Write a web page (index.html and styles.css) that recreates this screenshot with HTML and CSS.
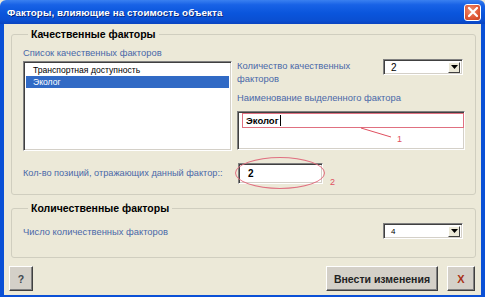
FILE: index.html
```html
<!DOCTYPE html>
<html lang="ru">
<head>
<meta charset="utf-8">
<title>Факторы</title>
<link rel="stylesheet" href="styles.css">
</head>
<body>
<div class="window">
  <div class="titlebar">
    <span class="title">Факторы, влияющие на стоимость объекта</span>
    <span class="close">
      <svg width="12" height="12" viewBox="0 0 12 12"><path d="M2 2 L10 10 M10 2 L2 10" stroke="#fff" stroke-width="2.2" stroke-linecap="round"/></svg>
    </span>
  </div>
  <div class="frame">
    <fieldset class="group group-qual">
      <legend>Качественные факторы</legend>
      <div class="qual-top">
        <div class="col-left">
          <div class="label">Список качественных факторов</div>
          <div class="listbox sunken">
            <div class="item">Транспортная доступность</div>
            <div class="item selected">Эколог</div>
          </div>
        </div>
        <div class="col-right">
          <div class="count-row">
            <div class="label two-line">Количество качественных факторов</div>
            <div class="combo sunken"><span class="val">2</span><span class="drop"><svg width="7" height="4" viewBox="0 0 7 4"><path d="M0 0 H7 L3.5 4 Z" fill="#000"/></svg></span></div>
          </div>
          <div class="label name-label">Наименование выделенного фактора</div>
          <div class="memo sunken">
            <div class="memo-text">Эколог<span class="caret"></span></div>
            <div class="mark-rect"></div>
            <svg class="mark-line" width="40" height="14" viewBox="0 0 40 14"><path d="M1 1 L31 10" stroke="#e05060" stroke-width="1"/></svg>
            <span class="mark-num num1">1</span>
          </div>
        </div>
      </div>
      <div class="pos-row">
        <div class="label pos-label">Кол-во позиций, отражающих данный фактор::</div>
        <div class="pos-wrap">
          <div class="textbox sunken">2</div>
          <div class="ellipse"></div>
          <span class="mark-num num2">2</span>
        </div>
      </div>
    </fieldset>
    <fieldset class="group group-quant">
      <legend>Количественные факторы</legend>
      <div class="quant-row">
        <div class="label">Число количественных факторов</div>
        <div class="combo sunken"><span class="val small">4</span><span class="drop"><svg width="7" height="4" viewBox="0 0 7 4"><path d="M0 0 H7 L3.5 4 Z" fill="#000"/></svg></span></div>
      </div>
    </fieldset>
    <div class="buttons">
      <button class="btn btn-help">?</button>
      <div class="btn-right">
        <button class="btn btn-apply">Внести изменения</button>
        <button class="btn btn-x">X</button>
      </div>
    </div>
  </div>
</div>
</body>
</html>
```

FILE: styles.css
```css
* { box-sizing: border-box; }
html, body { margin: 0; padding: 0; }
body {
  width: 485px;
  height: 297px;
  overflow: hidden;
  font-family: "Liberation Sans", Arial, sans-serif;
  font-size: 10px;
  background: #ECE9D8;
}
.window {
  width: 485px;
  height: 297px;
  display: flex;
  flex-direction: column;
}
.titlebar {
  height: 24px;
  flex: none;
  display: flex;
  align-items: center;
  justify-content: space-between;
  padding: 0 4px 0 7px;
  background: linear-gradient(180deg, #3a80f0 0%, #1862e6 20%, #0a55dc 55%, #0a4fd2 85%, #0a44c0 100%);
  border-radius: 6px 6px 0 0;
}
.title {
  color: #fff;
  font-weight: bold;
  font-size: 9.8px;
  letter-spacing: 0.1px;
  text-shadow: 1px 1px 0 #0a2a80;
}
.close {
  width: 17px;
  height: 17px;
  border: 1px solid #fff;
  border-radius: 3px;
  background: radial-gradient(circle at 40% 35%, #f09070 0%, #e05a38 55%, #c8401e 100%);
  display: flex;
  align-items: center;
  justify-content: center;
}
.frame {
  flex: 1;
  display: flex;
  flex-direction: column;
  background: #ECE9D8;
  border: solid #0a50d6;
  border-width: 0 4px 4px 4px;
  padding: 3px 5px 4px 7px;
}
.group {
  margin: 0;
  border: 1px solid #d0cebf;
  border-radius: 3px;
  padding: 0;
  min-width: 0;
}
.group legend {
  font-weight: bold;
  font-size: 10.5px;
  line-height: 14px;
  color: #000;
  padding: 0 3px;
  margin-left: 5px;
}
.group-qual {
  height: 168px;
  padding: 5px 10px 0 11px;
}
.label {
  color: #4a68a8;
  font-size: 9.4px;
  line-height: 13px;
  white-space: nowrap;
}
.qual-top {
  display: flex;
  gap: 5px;
}
.col-left {
  width: 209px;
  display: flex;
  flex-direction: column;
  gap: 2px;
}
.sunken {
  background: #fff;
  border-top: 1px solid #808080;
  border-left: 1px solid #808080;
  border-right: 1px solid #fff;
  border-bottom: 1px solid #fff;
  box-shadow: inset 1px 1px 0 #404040, inset -1px -1px 0 #d4d0c8;
}
.listbox {
  height: 90px;
  padding: 2px;
}
.item {
  height: 12px;
  line-height: 12px;
  padding-left: 7px;
  color: #000;
  font-size: 8.6px;
}
.item.selected {
  background: #316ac5;
  color: #fff;
}
.col-right {
  width: 228px;
  padding-top: 13px;
  display: flex;
  flex-direction: column;
}
.count-row {
  display: flex;
  justify-content: space-between;
  align-items: flex-start;
}
.two-line {
  width: 140px;
  white-space: normal;
  line-height: 13px;
}
.combo {
  width: 80px;
  height: 16px;
  display: flex;
  align-items: center;
  justify-content: space-between;
  margin-right: 2px;
  margin-top: 0;
  padding: 2px 2px 2px 7px;
}
.val {
  font-size: 10px;
  color: #000;
}
.val.small { font-size: 8px; }
.drop {
  width: 12px;
  height: 11px;
  background: #ece9d8;
  border-top: 1px solid #fff;
  border-left: 1px solid #fff;
  border-right: 1px solid #404040;
  border-bottom: 1px solid #404040;
  display: flex;
  align-items: center;
  justify-content: center;
}
.name-label {
  margin-top: 6px;
}
.memo {
  position: relative;
  height: 39px;
  margin-top: 7px;
  width: 228px;
}
.memo-text {
  padding: 3px 0 0 8px;
  font-weight: bold;
  font-size: 9.5px;
  line-height: 11px;
  color: #000;
  display: flex;
  align-items: center;
}
.caret {
  display: inline-block;
  width: 1px;
  height: 11px;
  background: #000;
  margin-left: 1px;
}
.mark-rect {
  position: absolute;
  left: 4px;
  top: 1px;
  width: 222px;
  height: 15px;
  border: 1px solid #e07080;
}
.mark-line {
  position: absolute;
  left: 122px;
  top: 15px;
}
.mark-num {
  position: absolute;
  color: #e05060;
  font-size: 9px;
  line-height: 10px;
}
.num1 { left: 159px; top: 22px; }
.pos-row {
  margin-top: 12px;
  display: flex;
  align-items: center;
}
.pos-label {
  width: 215px;
  font-size: 9.2px;
}
.pos-wrap {
  position: relative;
}
.textbox {
  width: 85px;
  height: 21px;
  padding: 4px 0 0 9px;
  font-weight: bold;
  font-size: 10px;
  line-height: 12px;
  color: #000;
}
.ellipse {
  position: absolute;
  left: -3px;
  top: -6px;
  width: 90px;
  height: 32px;
  border: 1px solid #e07080;
  border-radius: 50%;
}
.num2 { left: 92px; top: 14px; }
.group-quant {
  margin-top: 6px;
  height: 57px;
  padding: 8px 10px 0 11px;
}
.quant-row {
  display: flex;
  justify-content: space-between;
  align-items: center;
}
.buttons {
  margin-top: 8px;
  display: flex;
  justify-content: space-between;
  margin-left: -2px;
  margin-right: 1px;
}
.btn-right {
  display: flex;
  gap: 9px;
}
.btn {
  height: 25px;
  background: #d4d0c8;
  border-top: 1px solid #fff;
  border-left: 1px solid #fff;
  border-right: 1px solid #404040;
  border-bottom: 1px solid #404040;
  box-shadow: inset -1px -1px 0 #808080;
  font-family: "Liberation Sans", Arial, sans-serif;
  font-weight: bold;
  font-size: 10.5px;
  padding: 0;
  color: #000;
}
.btn-help { width: 24px; color: #404850; }
.btn-apply { width: 112px; color: #222; }
.btn-x { width: 28px; color: #a83218; font-size: 11px; }
```
